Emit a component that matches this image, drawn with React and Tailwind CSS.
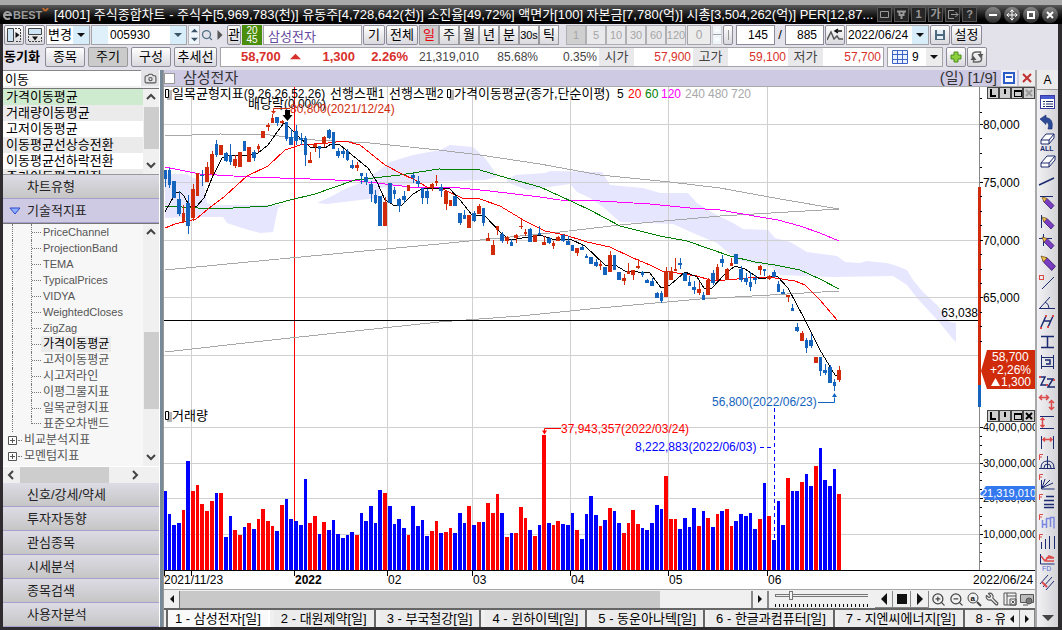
import React, { useState } from 'react';
import { Camera, Search, Wrench, ZoomIn, ZoomOut, Move } from 'lucide-react';

const NAVY = '#1c2a70';
const CORAL = '#dc4a4a';
const UP = '#d02c0c';
const DOWN = '#1464be';

const FIRST_X = 165;
const STEP = 4.684;
const VOLUME_BASE = 570;

// bar heights, negative = down day
const volumes = [
  -79, -56, -45, -47, 60, -109, 79, 85, 66, 59, 69, -77, 77, -33, -54, 40, 35, -43, 47, -41,
  51, 61, 49, 44, -39, 65, -71, -51, -49, -45, -91, 47, 54, -36, 48, -40, -50, -36, -32, -35,
  -38, 35, -57, -49, -64, -47, -80, 77, -64, -46, -51, -42, 35, -64, -44, -50, -34, 39, 49, -37,
  38, 42, -37, -57, -47, 64, -45, 48, -48, 67, 57, 76, -57, 33, -37, 37, 63, 52, -40, 34,
  -45, 135, -47, 45, 49, -46, -45, -57, 40, -31, -56, -74, -55, 44, -50, 62, -59, -47, 37, 47,
  60, 46, -42, -40, -47, -65, -61, 94, 51, 51, -41, -52, -43, -62, 44, -59, 52, -43, 56, -59,
  61, 44, -49, -56, -54, -57, -41, 51, -87, 54, -30, -69, -45, 92, -79, -79, 88, -96, -84, 104,
  -122, -90, -84, -101, 76,
];

// [isUp, bodyTop, bodyBottom, high, low]
const candles = [
  [0, 170, 179, 170, 187], [0, 170, 185, 168, 188], [0, 181, 198, 181, 198], [0, 199, 214, 191, 216], [1, 213, 222, 205, 223],
  [0, 203, 226, 195, 234], [1, 189, 218, 184, 221], [1, 173, 196, 173, 196], [0, 175, 176, 170, 186], [1, 167, 182, 162, 182],
  [1, 154, 174, 151, 176], [0, 144, 155, 140, 157], [1, 145, 155, 145, 155], [0, 153, 161, 152, 162], [0, 155, 162, 144, 165],
  [1, 159, 166, 155, 168], [1, 152, 167, 152, 167], [0, 141, 151, 141, 151], [1, 147, 162, 147, 162], [0, 152, 158, 150, 161],
  [1, 146, 149, 144, 152], [1, 131, 138, 131, 138], [1, 125, 127, 123, 131], [1, 118, 123, 114, 123], [0, 117, 123, 117, 126],
  [1, 121, 123, 120, 124], [0, 122, 139, 122, 141], [0, 137, 145, 129, 145], [0, 131, 141, 125, 145], [0, 138, 140, 133, 145],
  [0, 138, 155, 136, 166], [1, 160, 163, 152, 163], [1, 144, 147, 144, 152], [0, 146, 149, 146, 158], [1, 137, 144, 136, 147],
  [0, 130, 138, 129, 139], [0, 132, 149, 132, 149], [0, 151, 156, 148, 158], [0, 151, 154, 149, 158], [0, 151, 160, 149, 161],
  [0, 165, 168, 160, 169], [1, 165, 168, 162, 171], [0, 173, 176, 173, 184], [0, 177, 182, 173, 185], [0, 184, 194, 181, 202],
  [0, 195, 203, 190, 204], [0, 196, 226, 196, 226], [1, 202, 226, 197, 226], [0, 183, 203, 183, 203], [0, 190, 194, 187, 199],
  [0, 199, 206, 198, 212], [0, 196, 200, 191, 203], [1, 185, 191, 185, 191], [0, 175, 178, 173, 183], [0, 181, 184, 176, 187],
  [0, 188, 198, 188, 204], [0, 191, 198, 189, 204], [1, 184, 188, 183, 191], [1, 181, 183, 175, 186], [0, 187, 191, 184, 197],
  [1, 191, 204, 190, 210], [1, 200, 206, 200, 206], [0, 196, 206, 196, 206], [0, 213, 223, 213, 225], [0, 215, 219, 210, 219],
  [1, 215, 228, 215, 228], [0, 213, 221, 211, 222], [1, 206, 214, 204, 214], [0, 208, 223, 208, 226], [1, 238, 241, 233, 241],
  [1, 245, 255, 240, 255], [1, 226, 230, 226, 235], [0, 234, 241, 232, 243], [1, 237, 241, 236, 244], [0, 242, 246, 239, 246],
  [1, 235, 238, 234, 243], [1, 226, 227, 219, 229], [1, 232, 234, 229, 236], [0, 229, 242, 228, 242], [1, 235, 242, 235, 242],
  [0, 233, 235, 226, 235], [1, 242, 245, 236, 245], [0, 238, 243, 237, 244], [1, 243, 246, 241, 249], [1, 237, 241, 236, 241],
  [0, 235, 241, 234, 242], [0, 241, 245, 236, 245], [0, 245, 251, 245, 251], [1, 248, 253, 248, 256], [0, 247, 250, 245, 250],
  [0, 256, 258, 254, 258], [0, 257, 264, 257, 264], [0, 262, 266, 259, 267], [1, 264, 266, 261, 270], [0, 267, 275, 267, 275],
  [1, 255, 272, 251, 272], [0, 255, 270, 255, 270], [0, 272, 280, 272, 280], [1, 278, 281, 274, 285], [1, 271, 274, 263, 274],
  [1, 270, 275, 270, 280], [1, 266, 268, 259, 269], [0, 272, 275, 271, 277], [0, 280, 283, 279, 283], [0, 281, 286, 278, 286],
  [0, 293, 298, 292, 298], [0, 293, 301, 291, 303], [1, 271, 297, 267, 297], [1, 271, 280, 267, 280], [1, 269, 271, 258, 271],
  [0, 263, 265, 258, 269], [0, 273, 281, 273, 281], [0, 282, 286, 276, 286], [0, 287, 290, 281, 294], [1, 289, 293, 282, 295],
  [0, 295, 300, 292, 300], [1, 280, 295, 278, 295], [0, 273, 283, 270, 285], [1, 267, 280, 264, 280], [0, 259, 263, 255, 267],
  [1, 269, 280, 268, 280], [1, 263, 266, 258, 266], [0, 254, 264, 254, 264], [0, 269, 280, 266, 282], [0, 278, 282, 273, 285],
  [0, 282, 287, 272, 291], [0, 278, 280, 275, 284], [1, 266, 270, 265, 275], [0, 269, 271, 269, 276], [1, 276, 279, 275, 280],
  [0, 272, 277, 270, 277], [0, 284, 292, 281, 292], [0, 292, 294, 289, 294], [1, 295, 297, 295, 302], [0, 308, 311, 304, 311],
  [0, 327, 331, 323, 332], [1, 333, 341, 331, 341], [0, 340, 348, 338, 353], [0, 340, 346, 334, 348], [1, 357, 363, 357, 363],
  [0, 357, 371, 357, 376], [0, 370, 373, 364, 375], [0, 367, 383, 365, 383], [0, 382, 386, 379, 391], [1, 370, 380, 366, 382],
];

const averages = [
  { color: '#a8a8a8', points: '165,136 220,134 270,135 315,140 370,143 439,150 480,155 540,164 600,175 670,182 720,188 780,199 839,209' },
  { color: '#a8a8a8', points: '165,270 290,258 439,244 500,238 560,232 620,225 720,216 839,209' },
  { color: '#a8a8a8', points: '165,352 290,338 439,322 520,316 600,308 700,299 770,295 839,291' },
  { color: '#ff00ff', points: '165,167 200,174 250,177 310,179 360,181 410,187 450,187 490,191 540,197 560,200 600,201 650,204 690,208 720,210 760,217 778,220 800,226 820,233 839,241' },
  { color: '#008000', points: '165,206 215,209 268,206 290,200 315,194 355,180 400,175 439,169 480,170 500,176 540,187 560,196 590,210 620,226 660,236 687,241 710,249 730,256 755,262 775,265 800,270 820,279 839,289' },
  { color: '#ff0000', points: '165,228 175,224 196,219 208,209 225,196 247,176 268,166 285,150 300,145 328,143 345,141 360,145 385,165 400,173 415,180 427,187 445,190 462,198 480,199 500,206 525,221 545,231 565,235 587,242 610,247 633,258 650,265 662,271 677,273 697,276 710,280 725,280 760,277 775,278 795,281 805,285 820,300 837,320 839,321' },
  { color: '#000000', points: '165,212 170,203 176,193 180,192 184,196 190,207 197,206 204,198 212,178 222,158 230,155 245,156 258,153 268,145 280,128 284,123 290,128 300,138 310,147 325,148 331,144 340,145 352,155 368,168 377,182 385,200 395,206 402,205 413,194 422,189 439,188 450,189 460,200 472,215 485,216 500,232 510,240 540,235 555,240 570,239 585,246 605,265 615,265 625,271 650,273 661,288 670,285 685,272 697,277 704,288 712,288 725,274 735,266 745,269 760,279 777,276 788,288 805,320 820,350 835,375 838,376' },
];

const clouds = [
  '165,174 187,174 193,178 203,180 207,203 213,205 282,205 278,208 273,232 260,233 242,228 227,223 223,217 188,217 165,218',
  '317,203 330,197 347,188 360,183 377,172 390,162 413,155 440,150 450,145 473,147 485,158 495,172 497,177 485,180 430,182 380,188 378,198 360,200 327,204',
  '507,180 515,175 545,173 550,171 602,172 610,185 643,188 660,193 688,193 697,203 713,213 733,223 743,229 768,230 775,238 790,242 807,252 837,256 845,262 860,263 867,261 887,263 897,266 907,270 913,280 923,292 937,305 950,322 956,323 956,342 952,338 940,323 917,298 907,285 893,276 833,277 780,275 772,267 737,260 717,243 693,233 673,224 620,222 603,207 590,198 577,192 570,184 527,190 507,182',
];

const searchResults = ['가격이동평균', '거래량이동평균', '고저이동평균', '이동평균선상승전환', '이동평균선하락전환', '주가이동평균밀집'];
const treeLeaves = ['PriceChannel', 'ProjectionBand', 'TEMA', 'TypicalPrices', 'VIDYA', 'WeightedCloses', 'ZigZag', '가격이동평균', '고저이동평균', '시고저라인', '이평그물지표', '일목균형지표', '표준오차밴드'];
const treeGroups = ['비교분석지표', '모멘텀지표'];
const menuSections = ['신호/강세/약세', '투자자동향', '관심종목', '시세분석', '종목검색', '사용자분석'];
const periods = ['일', '주', '월', '년', '분', '30s', '틱'];
const minutes = ['1', '5', '10', '30', '60', '120'];
const stockTabs = ['삼성전자', '대원제약', '부국철강', '윈하이텍', '동운아나텍', '한글과컴퓨터', '지엔씨에너지'];

// left edge and width of bar i, leaving one pixel between neighbours
const barLeft = (i) => Math.round(FIRST_X + i * STEP) - 2;
const barBox = (i) => {
  const left = Math.max(164, barLeft(i));
  return { left, width: barLeft(i + 1) - left - 1 };
};

const Triangle = ({ dir = 'down', size = 8, color = '#111' }) => {
  const turn = { down: 'M0 2h8L4 6z', up: 'M0 6h8L4 2z', left: 'M6 0v8L2 4z', right: 'M2 0v8l4-4z' };
  return (
    <svg width={size} height={size} viewBox="0 0 8 8" className="shrink-0" aria-hidden="true">
      <path d={turn[dir]} fill={color} />
    </svg>
  );
};

const Chevron = ({ dir }) => {
  const d = { up: 'M2 7l4-4 4 4', down: 'M2 4l4 4 4-4', left: 'M8 2L4 6l4 4', right: 'M4 2l4 4-4 4' };
  return (
    <svg width="12" height="12" viewBox="0 0 12 12" aria-hidden="true">
      <path d={d[dir]} fill="none" stroke="#444" strokeWidth="2" />
    </svg>
  );
};

const ToolButton = ({ label, className = '', children }) => (
  <button
    aria-label={label}
    className={`flex h-5 shrink-0 items-center justify-center rounded-xs border border-[#8d8b98] bg-linear-to-b from-white to-[#d9d9de] whitespace-nowrap ${className}`}
  >
    {children}
  </button>
);

const SelectBox = ({ label, value, className = '' }) => (
  <span className={`flex h-5 shrink-0 border border-[#a3a3a8] bg-white ${className}`}>
    <select aria-label={label} className="min-w-0 flex-1 appearance-none bg-transparent pl-px leading-4 outline-none">
      <option>{value}</option>
    </select>
    <span className="flex w-4 items-center justify-center bg-[#d8edfa]">
      <Triangle />
    </span>
  </span>
);

const Spinner = () => (
  <span className="flex h-5 w-3 shrink-0 flex-col items-center justify-around border border-[#b5b5ba] bg-[#eef5fb]">
    <Triangle dir="up" size={7} color="#3b5568" />
    <Triangle dir="down" size={7} color="#3b5568" />
  </span>
);

const windowTools = [
  ['복사', <path d="M2.500 3.500h8v6h-8z" />],
  ['고정', <path d="M2 3.500h9M4.500 4v3h4V4M6.500 7v4" strokeWidth="2" />],
  ['1', null],
  ['가', null],
  ['내보내기', <path d="M8 2.500H2.500v8H8M5 6.500h7M9.500 4L12 6.500 9.500 9" />],
  ['?', null],
];

const TitleBar = () => (
  <header className="flex h-6 shrink-0 items-center border-t-[5px] border-[#a9a9a9] bg-linear-to-b from-[#5a5a5a] via-[#1c1c1c] to-black pl-0.5 text-white">
    <span className="flex w-[52px] shrink-0 items-center text-[11px] font-bold text-[#9c9c9c]">
      <svg width="11" height="11" viewBox="0 0 11 11" aria-hidden="true">
        <path d="M2 6h7a3.5 3.5 0 1 0-1 3" fill="none" stroke="#a2a2a2" strokeWidth="2" />
      </svg>
      BEST
      <svg width="7" height="5" viewBox="0 0 7 5" className="mb-2" aria-hidden="true">
        <path d="M1 0q2 5 5 0" fill="none" stroke="#c56a2c" strokeWidth="2" />
      </svg>
    </span>
    <h1 className="min-w-0 flex-1 whitespace-nowrap">
      [4001] 주식종합차트 - 주식수[5,969,783(천)] 유동주[4,728,642(천)] 소진율[49,72%] 액면가[100] 자본금[7,780(억)] 시총[3,504,262(억)] PER[12,87...
    </h1>
    <div className="flex shrink-0 gap-0.5 pr-2 text-[11px] font-bold text-[#9a9a9a]">
      {windowTools.map(([name, drawing]) => (
        <button key={name} aria-label={name} className="flex size-[15px] items-center justify-center border border-[#555] bg-[#262626] leading-none">
          {drawing ? (
            <svg width="13" height="13" viewBox="0 0 13 13" fill="none" stroke="#9a9a9a">
              {drawing}
            </svg>
          ) : (
            name
          )}
        </button>
      ))}
    </div>
    <div className="flex shrink-0 gap-[3px] pr-1">
      {['min', 'move', 'max', 'close'].map((kind) => (
        <button key={kind} aria-label={kind} className="flex size-4 items-center justify-center rounded-full bg-linear-to-b from-[#888] to-[#2c2c2c]">
          {kind === 'move' ? (
            <Move size={12} color="#fff" />
          ) : (
            <svg width="10" height="10" viewBox="0 0 10 10" fill="none" stroke="#fff" strokeWidth="2">
              <path d={kind === 'min' ? 'M1 5h8' : kind === 'max' ? 'M2 2h6v6H2z' : 'M2 2l6 6M8 2l-6 6'} />
            </svg>
          )}
        </button>
      ))}
    </div>
  </header>
);

const PrimaryToolbar = () => {
  const [period, setPeriod] = useState('일');

  return (
    <div className="flex h-5 items-center gap-px">
      <ToolButton label="좌측 패널" className="w-5">
        <svg width="14" height="14" viewBox="0 0 14 14" fill="none" stroke="#444">
          <path d="M.5 .5h6v13h-6z" fill="#cfe4f4" />
          <path d="M8 .5h5.5v13H8" strokeDasharray="2 1" />
          <path d="M8.500 4v6l4-3z" fill="#111" stroke="none" />
        </svg>
      </ToolButton>
      <ToolButton label="상단 패널" className="w-5">
        <svg width="14" height="14" viewBox="0 0 14 14" fill="none" stroke="#444">
          <path d="M.5 .5h13v6H.5z" fill="#cfe4f4" />
          <path d="M.5 8v5.500h13V8" strokeDasharray="2 1" />
          <path d="M4 8.500h6l-3 4z" fill="#111" stroke="none" />
        </svg>
      </ToolButton>
      <SelectBox label="변경" value="변경" className="w-11" />
      <span className="flex h-5 w-[96px] shrink-0 border border-[#a3a3a8] bg-white text-xs">
        <span className="w-4 bg-[#dff0fb]" />
        <input aria-label="종목코드" defaultValue="005930" className="min-w-0 flex-1 pl-0.5 outline-none" />
        <span className="flex w-4 items-center justify-center bg-[#d8edfa]">
          <Triangle color="#3b5568" />
        </span>
      </span>
      <Spinner />
      <button aria-label="종목찾기" className="flex h-5 w-3 shrink-0 items-center justify-center">
        <Search size={12} color="#4d6f86" strokeWidth={2.5} />
      </button>
      <button aria-label="다음" className="flex h-5 w-3 shrink-0 items-center justify-center">
        <Triangle dir="right" size={10} color="#555" />
      </button>
      <ToolButton className="w-3.5">관</ToolButton>
      <button className="flex h-5 w-5 shrink-0 flex-col items-center justify-center bg-[#4b8e0c] text-[10px] leading-[9px] text-white">
        <span>20</span>
        <span>45</span>
      </button>
      <input
        aria-label="종목명"
        defaultValue="삼성전자"
        className="h-5 w-[99px] shrink-0 border border-[#a3a3a8] bg-white pl-1 text-[#6448a0] outline-none"
      />
      <ToolButton className="w-[22px]">기</ToolButton>
      <ToolButton className="w-8">전체</ToolButton>
      <div className="flex shrink-0">
        {periods.map((name) => (
          <button
            key={name}
            onClick={() => setPeriod(name)}
            className={`flex h-5 w-5 items-center justify-center border border-[#9a9a9e] ${name === '30s' ? 'text-[11px]' : ''} ${
              period === name ? 'bg-[#cdcdcd] text-red-600' : 'bg-linear-to-b from-white to-[#d9d9de]'
            }`}
          >
            {name}
          </button>
        ))}
      </div>
      <div className="ml-1.5 flex shrink-0 text-[11px]">
        {minutes.map((name, i) => (
          <button
            key={name}
            disabled
            className={`flex h-5 w-5 items-center justify-center border border-[#b0b0b4] text-[#a5a5a5] ${i === 0 ? 'bg-[#cfcfcf]' : 'bg-[#e9e9ec]'}`}
          >
            {name}
          </button>
        ))}
      </div>
      <input
        aria-label="분"
        disabled
        defaultValue="0"
        className="h-5 w-6 shrink-0 border border-[#a3a3a8] bg-[#ececec] text-center text-xs text-[#a5a5a5]"
      />
      <span className="flex h-5 w-2.5 shrink-0 flex-col items-center justify-around border border-[#cfcfd4] bg-[#eef5fb]">
        <Triangle dir="up" size={6} color="#fff" />
        <span className="w-full border-t border-[#a3a3a8]" />
        <Triangle dir="down" size={6} color="#fff" />
      </span>
      <ToolButton label="구분" className="w-2.5">
        <span className="h-2.5 border-l border-[#999]" />
      </ToolButton>
      <input aria-label="표시 봉수" defaultValue="145" className="ml-0.5 h-5 w-[39px] shrink-0 border border-[#8d8b98] bg-white pr-1.5 text-right text-xs" />
      <span className="w-2 text-center">/</span>
      <input aria-label="전체 봉수" defaultValue="885" className="h-5 w-[39px] shrink-0 border border-[#8d8b98] bg-white pr-1.5 text-right text-xs" />
      <ToolButton label="추세" className="w-5">
        <svg width="16" height="14" viewBox="0 0 16 14" fill="none" stroke="#555" strokeWidth="1.500">
          <path d="M0 12L4 4l3 7 3-3 2 3h4" />
          <path d="M15 3H9M11 1L8 3l3 2" stroke="#111" />
        </svg>
      </ToolButton>
      <SelectBox label="날짜" value="2022/06/24" className="w-[83px] text-xs" />
      <ToolButton label="저장" className="w-5">
        <svg width="12" height="12" viewBox="0 0 12 12">
          <path d="M1 1h10v10H1z" fill="#4d6a80" />
          <path d="M3 1h6v4H3zM3 7h6v3H3z" fill="#e6eef4" />
        </svg>
      </ToolButton>
      <ToolButton className="w-[31px]">설정</ToolButton>
    </div>
  );
};

const QuoteToolbar = () => (
  <div className="flex h-5 items-center gap-[3px]">
    <span className="w-[38px] shrink-0 text-[13px] font-bold">동기화</span>
    <ToolButton className="w-10">종목</ToolButton>
    <button className="h-5 w-10 shrink-0 rounded-xs border border-[#9a9a9e] bg-[#cbcbcb]">주기</button>
    <ToolButton className="w-10">구성</ToolButton>
    <ToolButton className="w-[43px]">추세선</ToolButton>
    <div className="flex h-5 min-w-0 shrink-0 items-center border border-[#a3a3a8] bg-white text-xs text-[#444]">
      <span className="flex w-[134px] items-center justify-between pl-5 text-[13px] font-bold text-[#d8302c]">
        <span>58,700</span>
        <Triangle dir="up" size={11} color="#d8302c" />
        <span className="pl-3">1,300</span>
      </span>
      <span className="w-[53px] text-right text-[13px] font-bold text-[#d8302c]">2.26%</span>
      <span className="w-[71px] text-right">21,319,010</span>
      <span className="w-[59px] text-right">85.68%</span>
      <span className="w-[59px] text-right">0.35%</span>
      <span className="ml-0.5 flex h-full w-[35px] items-center justify-center bg-[#e9e9ec] text-[13px]">시가</span>
      <span className="w-[59px] pr-0.5 text-right text-[#d8302c]">57,900</span>
      <span className="flex h-full w-[35px] items-center justify-center bg-[#e9e9ec] text-[13px]">고가</span>
      <span className="w-[60px] pr-0.5 text-right text-[#d8302c]">59,100</span>
      <span className="flex h-full w-[35px] items-center justify-center bg-[#e9e9ec] text-[13px]">저가</span>
      <span className="w-[60px] pr-0.5 text-right text-[#d8302c]">57,700</span>
    </div>
    <span className="flex h-5 w-[56px] shrink-0 items-center border border-[#a3a3a8] bg-white text-xs">
      <svg width="16" height="14" viewBox="0 0 16 14" className="mx-1 shrink-0">
        <path d="M.5 .5h15v13H.5zM5.500 0v14M10.500 0v14M0 4.500h16M0 9.500h16" fill="#eaf2ff" stroke="#3c62c8" />
      </svg>
      <select aria-label="화면 분할" className="min-w-0 flex-1 appearance-none outline-none">
        <option>9</option>
      </select>
      <span className="flex h-full w-4 items-center justify-center bg-[#ececec]">
        <Triangle />
      </span>
    </span>
    <ToolButton label="추가" className="w-5">
      <svg width="12" height="12" viewBox="0 0 12 12">
        <path d="M4 1h4v3h3v4H8v3H4V8H1V4h3z" fill="#8ccf3c" stroke="#4a8c1c" />
      </svg>
    </ToolButton>
    <ToolButton label="새로고침" className="-ml-0.5 w-5">
      <svg width="14" height="14" viewBox="0 0 14 14" fill="none" stroke="#666" strokeWidth="1.500">
        <path d="M2.500 8V5q0-3 4-3h4v3M11.500 6v3q0 3-4 3h-4V9" />
        <path d="M7.500 4h6l-3 4zM.5 10h6l-3-4z" fill="#555" stroke="none" />
      </svg>
    </ToolButton>
  </div>
);

const VerticalScroll = ({ before, thumb }) => (
  <div className="flex w-4 shrink-0 flex-col items-center bg-[#f0f0f0]">
    <span className="flex h-[18px] items-center">
      <Chevron dir="up" />
    </span>
    <span className={before} />
    <span className={`w-[15px] bg-[#cdcdcd] ${thumb}`} />
    <span className="flex-1" />
    <span className="flex h-[18px] items-center">
      <Chevron dir="down" />
    </span>
  </div>
);

const SectionButton = ({ label, open }) => (
  <button
    className={`flex h-6 w-full shrink-0 items-center border-b border-[#a69fcb] text-[13px] text-[#222] ${
      open ? 'bg-[#cfcae3]' : 'bg-linear-to-b from-[#dddbe5] to-[#c6c6c6]'
    }`}
  >
    <span className="flex w-6 justify-center">
      {open && (
        <svg width="12" height="8" viewBox="0 0 12 8" aria-hidden="true">
          <path d="M1 1h10L6 7z" fill="#8fb0ff" stroke="#2b46c8" />
        </svg>
      )}
    </span>
    {label}
  </button>
);

const Sidebar = () => {
  const [query, setQuery] = useState('이동');

  return (
    <aside className="flex w-[157px] shrink-0 flex-col border-r border-white bg-[#f0f0f0]">
      <div className="flex h-4 shrink-0">
        <input
          aria-label="지표 검색"
          value={query}
          onChange={(e) => setQuery(e.target.value)}
          className="min-w-0 flex-1 border-t border-[#888] bg-white pl-0.5 leading-none outline-none"
        />
        <button aria-label="캡처" className="flex w-[18px] items-center justify-center bg-[#e4e4e8]">
          <Camera size={13} color="#555" />
        </button>
      </div>
      <div className="mt-0.5 flex h-[86px] shrink-0 border-t border-[#777] bg-white">
        <ul className="min-w-0 flex-1 overflow-hidden">
          {searchResults.map((name, i) => (
            <li
              key={name}
              className={`h-4 pl-[3px] leading-4 whitespace-nowrap ${i === 0 ? 'bg-[#cfebcf]' : i % 2 ? 'bg-[#ebebeb]' : 'bg-white'}`}
            >
              {name}
            </li>
          ))}
        </ul>
        <VerticalScroll before="h-0" thumb="h-[42px]" />
      </div>
      <div className="h-px shrink-0 bg-[#999]" />
      <SectionButton label="차트유형" />
      <SectionButton label="기술적지표" open />

      <div className="flex min-h-0 flex-1 border-t border-[#777] bg-[#f7f7f7]">
        <ul className="min-w-0 flex-1 overflow-hidden text-xs text-[#555]">
          {treeLeaves.map((name, i) => (
            <li key={name} className="flex h-4 items-center">
              <span className="ml-[9px] w-[19px] self-stretch border-l border-dotted border-[#777]" />
              <span className={`flex w-2.5 border-l border-dotted border-[#777] ${i === treeLeaves.length - 1 ? 'h-2 items-end self-start' : 'items-center self-stretch'}`}>
                <span className="w-full border-t border-dotted border-[#777]" />
              </span>
              <span
                className={`px-0.5 leading-4 whitespace-nowrap ${/^[A-Z]/.test(name) ? 'text-[11px]' : ''} ${
                  name === '가격이동평균' ? 'bg-[#ebebeb] text-black' : ''
                }`}
              >
                {name}
              </span>
            </li>
          ))}
          {treeGroups.map((name) => (
            <li key={name} className="flex h-4 items-center">
              <svg width="9" height="9" viewBox="0 0 9 9" className="ml-[5px]" aria-hidden="true">
                <path d="M.5 .5h8v8h-8zM2 4.500h5M4.500 2v5" fill="#fff" stroke="#555" />
              </svg>
              <span className="mx-px w-1 border-t border-dotted border-[#777]" />
              <span className="pl-px leading-4 whitespace-nowrap">{name}</span>
            </li>
          ))}
        </ul>
        <VerticalScroll before="h-[90px]" thumb="h-[77px]" />
      </div>
      <div className="flex h-[17px] shrink-0 items-center border-t border-white bg-[#f0f0f0] pl-0.5">
        <Chevron dir="left" />
        <span className="mx-[3px] h-4 w-[89px] bg-[#cdcdcd]" />
        <span className="ml-[17px]">
          <Chevron dir="right" />
        </span>
      </div>
      {menuSections.map((name) => (
        <SectionButton key={name} label={name} />
      ))}
    </aside>
  );
};

const PaneButtons = ({ x, y, muted }) => (
  <g transform={`translate(${x} ${y})`} shapeRendering="crispEdges">
    {[0, 12, 24, 36].map((dx) => (
      <path key={dx} d={`M${dx + 0.5} .5h11v11h-11z`} fill="#cfcfcf" stroke="#444" />
    ))}
    <path d="M4 2v7h5M18 2v5" fill="none" stroke="#000" strokeWidth="2" />
    <path d="M27 3h7v6h-7zM27 4h7" fill="none" stroke="#000" />
    <path d="M39 3l6 6M45 3l-6 6" stroke={muted ? '#999' : '#000'} strokeWidth="2" shapeRendering="auto" />
  </g>
);

const LegendMark = ({ x, y }) => (
  <g transform={`translate(${x} ${y})`}>
    <path d="M2 1h5v10H2z" fill="#b5b5b5" />
    <path d="M.5 .5h3v8h-3z" fill="#fff" stroke="#000" />
  </g>
);

const PriceChart = () => (
  <svg viewBox="164 87 871 502" className="block h-full w-full bg-white text-xs" role="img" aria-label="삼성전자 일봉 차트">
    <g fill="#e6e6ff">
      {clouds.map((points) => (
        <polygon key={points} points={points} />
      ))}
    </g>
    <g stroke="#d0d0d0" shapeRendering="crispEdges">
      {[124, 182, 240, 297, 355, 427, 463, 498, 534].map((y) => (
        <path key={y} d={`M164 ${y}.5H979`} />
      ))}
      {[191, 387, 472, 570, 668, 767].map((x) => (
        <path key={x} d={`M${x}.5 87V570`} />
      ))}
    </g>
    <path d="M294.500 87V570" stroke="#f00" shapeRendering="crispEdges" />

    <g shapeRendering="crispEdges">
      {volumes.map((v, i) => {
        const { left, width } = barBox(i);
        return <rect key={i} x={left} y={VOLUME_BASE - Math.abs(v)} width={width} height={Math.abs(v)} fill={v > 0 ? '#f00' : '#00f'} />;
      })}
    </g>
    <g fill="none" shapeRendering="crispEdges">
      {averages.map((line) => (
        <polyline key={line.points} points={line.points} stroke={line.color} />
      ))}
    </g>
    <g shapeRendering="crispEdges">
      {candles.map(([isUp, top, bottom, high, low], i) => {
        const { left, width } = barBox(i);
        return (
          <g key={i} fill={isUp ? UP : DOWN}>
            <rect x={left + Math.floor(width / 2)} y={high} width="1" height={low - high} />
            <rect x={left} y={top} width={width} height={bottom - top} />
          </g>
        );
      })}
    </g>

    {/* support line and axes */}
    <path d="M164 320.500H979" stroke="#000" shapeRendering="crispEdges" />
    <text x="978" y="317" textAnchor="end">63,038</text>
    <path d="M979.500 87V570" stroke="#888" shapeRendering="crispEdges" />
    <rect x="978" y="187" width="3" height="198" fill={UP} />
    <rect x="978" y="385" width="3" height="22" fill={DOWN} />
    <path d="M164 570.500H1035M164.500 571v5M191.500 571v5M294.500 571v5M387.500 571v5M472.500 571v5M570.500 571v5M668.500 571v5M767.500 571v5" stroke="#000" shapeRendering="crispEdges" />
    <g stroke="#000" shapeRendering="crispEdges">
      {[98, 112, 138, 153, 167, 196, 211, 225, 254, 269, 283, 312, 326, 341].map((y) => (
        <path key={y} d={`M980 ${y}.5h2`} />
      ))}
      {[436, 445, 454, 472, 480, 489, 507, 516, 525, 543, 552, 561].map((y) => (
        <path key={y} d={`M980 ${y}.5h2`} />
      ))}
      {[124, 182, 240, 297, 427, 463, 498, 534].map((y) => (
        <path key={y} d={`M980 ${y}.5h3`} />
      ))}
    </g>
    <g>
      <text x="983" y="129">80,000</text>
      <text x="983" y="187">75,000</text>
      <text x="983" y="245">70,000</text>
      <text x="983" y="302">65,000</text>
    </g>
    <g fontSize="11">
      <text x="983" y="431">40,000,000</text>
      <text x="983" y="467">30,000,000</text>
      <text x="983" y="502">20,000,000</text>
      <text x="983" y="538">10,000,000</text>
    </g>
    <polygon points="981,371 987,350 1035,350 1035,389 987,389" fill={UP} />
    <g fill="#fff">
      <text x="992" y="361">58,700</text>
      <text x="990" y="374">+2,26%</text>
      <text x="1001" y="386">1,300</text>
      <path d="M991 386h9l-4.500-8z" />
    </g>
    <polygon points="980,494 986,486 1035,486 1035,500 986,500" fill="#3478f0" />
    <text x="981" y="497" fontSize="11" fill="#fff">21,319,010</text>

    <g>
      <text x="164" y="584">2021/11/23</text>
      <text x="295" y="584" fontWeight="bold">2022</text>
      <text x="388" y="584">02</text>
      <text x="473" y="584">03</text>
      <text x="571" y="584">04</text>
      <text x="669" y="584">05</text>
      <text x="768" y="584">06</text>
      <text x="973" y="584">2022/06/24</text>
    </g>

    {/* legend of the price pane */}
    <LegendMark x={165} y={89} />
    <text x="172" y="98">
      <tspan fontSize="13">일목균형지표</tspan>(9,26,26,52,26)
    </text>
    <text x="330" y="98"><tspan fontSize="13">선행스팬</tspan>1</text>
    <text x="389" y="98"><tspan fontSize="13">선행스팬</tspan>2</text>
    <LegendMark x={447} y={89} />
    <text x="454" y="98" fontSize="13">가격이동평균(종가,단순이평)</text>
    <text x="617" y="98">5</text>
    <text x="628" y="98" fill="#f00">20</text>
    <text x="645" y="98" fill="#008000">60</text>
    <text x="661" y="98" fill="#f0f">120</text>
    <g fill="#a8a8a8">
      <text x="685" y="98">240</text>
      <text x="708" y="98">480</text>
      <text x="731" y="98">720</text>
    </g>
    <LegendMark x={165} y={411} />
    <text x="172" y="420" fontSize="13">거래량</text>

    {/* annotations */}
    <text x="248" y="108"><tspan fontSize="13">배당락</tspan>(0.00%)</text>
    <text x="290" y="113" fill={UP}>80,800(2021/12/24)</text>
    <path d="M290 108.500h-16.500v4" fill="none" stroke={UP} />
    <path d="M271 111h5l-2.500 3z" fill={UP} />
    <path d="M285 110h5v5h2.500l-5 6-5-6h2.500z" fill="#000" />
    <text x="712" y="406" fill={DOWN}>56,800(2022/06/23)</text>
    <path d="M818 402.500h16.500v-5" fill="none" stroke={DOWN} />
    <path d="M832 397h5l-2.500-4z" fill={DOWN} />
    <text x="561" y="433" fill="#f00">37,943,357(2022/03/24)</text>
    <path d="M561 428.500h-16.500v3" fill="none" stroke="#f00" />
    <path d="M542 430.500h5l-2.500 4z" fill="#f00" />
    <text x="635" y="451" fill="#00f">8,222,883(2022/06/03)</text>
    <path d="M760 447.500h14M774.500 408V540" fill="none" stroke="#00f" strokeDasharray="4 3" shapeRendering="crispEdges" />

    <PaneButtons x={987} y={87} muted />
    <PaneButtons x={987} y={410} />
  </svg>
);

const ChartControls = () => (
  <div className="flex h-[19px] shrink-0 items-center border-t border-[#a5a5a5] bg-[#f0f0f0]">
    <button aria-label="왼쪽으로" className="flex h-[17px] w-4 items-center justify-center border-r border-[#777]">
      <Triangle dir="left" />
    </button>
    <div className="flex h-[17px] flex-1 border-r-2 border-[#888]">
      <span className="w-[84%] bg-[#c8c8c8]" />
    </div>
    <button aria-label="오른쪽으로" className="flex h-[17px] w-4 items-center justify-center border-r-2 border-[#888]">
      <Triangle dir="right" />
    </button>
    <div className="relative mx-1.5 h-full w-[94px]">
      <input type="range" aria-label="확대 비율" defaultValue="16" className="absolute inset-0 h-full w-full opacity-0" />
      <svg className="h-full w-full" viewBox="0 0 94 18" shapeRendering="crispEdges" aria-hidden="true">
        <path d="M0 5.500h93" stroke="#777" strokeWidth="3" />
        <path d="M1 5.500h92" stroke="#eee" />
        <path d="M14.500 1.500h3v8h-3z" fill="#f4f4f4" stroke="#777" />
        <path d="M0 15.500h94" stroke="#111" strokeWidth="3" strokeDasharray="1 3" />
      </svg>
    </div>
    {['left', 'stop', 'right'].map((kind) => (
      <button key={kind} aria-label={kind} className="flex h-[17px] w-[18px] items-center justify-center border-r border-b border-[#888]">
        {kind === 'stop' ? <span className="size-2.5 bg-[#111]" /> : <Triangle dir={kind} size={12} />}
      </button>
    ))}
    <button aria-label="확대" className="flex w-[18px] justify-center"><ZoomIn size={15} color="#444" /></button>
    <button aria-label="축소" className="flex w-[18px] justify-center"><ZoomOut size={15} color="#444" /></button>
    <button aria-label="전체 보기" className="flex w-[18px] justify-center">
      <svg width="15" height="15" viewBox="0 0 15 15" fill="none" stroke="#444">
        <circle cx="6" cy="6" r="5" />
        <path d="M10 10l4 4" strokeWidth="2" />
        <text x="3.500" y="8.500" fontSize="8" fontWeight="bold" fill="#111" stroke="none">a</text>
      </svg>
    </button>
    <button aria-label="설정" className="flex w-[18px] justify-center"><Wrench size={14} color="#555" className="-scale-x-100" /></button>
    <button aria-label="닫기" className="flex w-[18px] justify-center">
      <svg width="14" height="14" viewBox="0 0 14 14" fill="none" stroke="#555">
        <path d="M1 1h12v12H1zM4 1v12M4 4h9M7 7h6v6H7zM8.500 8.500l3 3M11.500 8.500l-3 3" />
      </svg>
    </button>
    <button aria-label="캡처 저장" className="flex w-4 justify-center">
      <svg width="14" height="14" viewBox="0 0 14 14" fill="none" stroke="#555">
        <path d="M.5 2.500h13v8H.5zM3 13h5" fill="#bbb" />
        <circle cx="9" cy="9" r="3" fill="#777" />
      </svg>
    </button>
  </div>
);

const StockTabs = () => {
  const [active, setActive] = useState('삼성전자');

  return (
    <nav className="flex h-[19px] shrink-0 border-t-2 border-[#666] bg-[#f0f0f0] pl-0.5">
      <div className="flex min-w-0 flex-1 gap-1 overflow-hidden whitespace-nowrap">
        {[...stockTabs, '유니온'].map((name, i) => (
          <button
            key={name}
            onClick={() => setActive(name)}
            className={`shrink-0 border-r-2 px-[7px] leading-4 ${
              active === name ? 'border-l-2 border-r-white border-l-[#666] bg-[#fafafa]' : 'border-[#666] bg-[#ececec]'
            }`}
          >
            {i + 1} - {name}[일]
          </button>
        ))}
      </div>
      <button aria-label="이전 탭" className="flex w-[15px] items-center justify-center border-r border-[#888]">
        <Triangle dir="left" />
      </button>
      <button aria-label="다음 탭" className="flex w-[15px] items-center justify-center border-r border-[#888]">
        <Triangle dir="right" />
      </button>
    </nav>
  );
};

const Pencil = ({ big }) => (
  <g transform={big ? 'translate(-2 -2) scale(1.2)' : undefined}>
    <path d="M6 6l4 .5 7 7-3 3.500-7-7z" fill="#7a3cc0" stroke="#3c1c70" strokeWidth=".8" />
    <path d="M5 5l5 1.500L7 10z" fill="#f0c050" stroke="#6b5010" strokeWidth=".6" />
  </g>
);

const FMark = () => <path d="M2.500 8V2.500H6M2.500 5H5" stroke={CORAL} />;

const drawingTools = [
  ['목록', <><rect x="3.500" y="3.500" width="14" height="13" fill="#fff" stroke="#3a3aa0" /><path d="M4 5.500h13" stroke="#4a5ad0" strokeWidth="3" /><path d="M6 9.500h2M9 9.500h7M6 12h2M9 12h7M6 14.500h2M9 14.500h7" /></>],
  ['되돌리기', <path d="M3 7l6-4v2.500q8 1 6 11.500h-4q2-6-2-7v2.500z" fill="#2c4c98" stroke="#1c2a70" strokeWidth=".6" />],
  ['모두 지우기', <><path d="M4 8l5-6h8l-5 6zM4 8v4h8V8M12 12l5-6V2" fill="#fff" /><text x="3" y="19" fontSize="7" fontWeight="bold" fill={NAVY} stroke="none">ALL</text></>],
  ['지우기', <path d="M4 11l6-7h8l-6 7zM4 11v4h8v-4M12 15l6-7V4" fill="#fff" />],
  ['추세선', <path d="M2 13L17 6" strokeWidth="1.500" />],
  ['수평선', <><path d="M3 4.500h13" /><Pencil /></>],
  ['수직선', <><path d="M4.500 3v13" /><Pencil /></>],
  ['십자선', <><path d="M2 6.500h13M6.500 2v12" /><Pencil /></>],
  ['펜', <Pencil big />],
  ['가격선', <><path d="M5 17L17 5" /><rect x="2.500" y="3.500" width="4" height="4" stroke={CORAL} /></>],
  ['각도선', <path d="M2 16.500h16M3 16L13 5M8 10q4 2 4 6" />],
  ['평행선', <><path d="M4 15L9 4M11 15l5-11M7 9h7" strokeWidth="1.500" /><path d="M3 16h2M8 4h2M10 15h2M15 4h2" stroke={CORAL} strokeWidth="2" /></>],
  ['구간', <path d="M4 4.500h13M4 15.500h13M10.500 4v12" strokeWidth="1.500" />],
  ['사각형', <><path d="M4.500 3v14M16.500 3v14M4 5.500h13M4 14.500h13" /><path d="M8 8h5v4H9" strokeWidth="1.500" /></>],
  ['파동', <><path d="M3 5h5l-4 8h6M10 7h6l-5 8h7" strokeWidth="1.500" /><path d="M2 5h2M9 13h2M16 8h2" stroke={CORAL} strokeWidth="2" /></>],
  ['화살표', <path d="M3 5.500h8M5 3L2.500 5.500 5 8M9 3l2.500 2.500L9 8M14.500 9v8M12 11l2.500-2.500L17 11M12 15l2.500 2.500L17 15" stroke={CORAL} strokeWidth="1.500" />],
  ['세로 간격', <><path d="M3 4.500h14M3 16.500h14" /><path d="M5.500 6v9M3.500 8l2-2 2 2M3.500 13l2 2 2-2" stroke={CORAL} strokeWidth="1.500" /></>],
  ['가로 간격', <><path d="M4.500 4v13M16.500 4v13" /><path d="M6 7.500h9M8 5.500l-2 2 2 2M13 5.500l2 2-2 2" stroke={CORAL} strokeWidth="1.500" /></>],
  ['피보나치 원', <><FMark /><path d="M2 16.500h16M10.500 4v13M4 16q0-7 6.500-7T17 16M7 16q0-4 3.500-4T14 16" /></>],
  ['피보나치 팬', <><FMark /><path d="M4.500 8v9h13M5 16L8 7M5 16l8-8M5 16l11-5" /></>],
  ['피보나치 되돌림', <><FMark /><path d="M9 4.500h8M7 8.500h10M7 12.500h10M7 15.500h10" strokeWidth="1.500" /></>],
  ['피보나치 목표', <><FMark /><path d="M5.500 8v8M5 12.500h4M9.500 6v10M9 6.500h4M13.500 5v10M13 5.500h4v11" stroke="#7a86e0" strokeWidth="1.500" /></>],
  ['피보나치 시간대', <><FMark /><path d="M4.500 10v7M8.500 7v10M12.500 4v13M17.500 4v13" /></>],
  ['패턴', <><path d="M3.500 2v10h14" /><path d="M4 4l4 5 4-5 5 2M9 6h8M9 9h8" stroke={CORAL} strokeWidth="1.500" /><text x="5" y="19" fontSize="7" fill="#5a6ad8" stroke="none">FD</text></>],
  ['채널', <><path d="M3 12L11 3M6 15l9-10M9 18l8-9" /><path d="M5 10l5 5" stroke={CORAL} strokeWidth="2" /></>],
];

const DrawingToolbar = () => (
  <aside className="flex w-[23px] shrink-0 flex-col border-l-2 border-[#a8a8a8] bg-linear-to-r from-[#f2f2f5] to-[#d4d4d8]">
    <button className="mb-0.5 h-5 border-b border-[#999] bg-[#ececec] text-xs">A</button>
    {drawingTools.map(([label, drawing]) => (
      <button key={label} aria-label={label} className="h-5 shrink-0">
        <svg width="20" height="20" viewBox="0 0 20 20" fill="none" stroke={NAVY}>
          {drawing}
        </svg>
      </button>
    ))}
    <button aria-label="더보기" className="mt-auto flex h-[19px] items-center justify-center">
      <Triangle size={12} color="#444" />
    </button>
  </aside>
);

const App = () => (
  <div className="flex h-screen flex-col overflow-hidden bg-[#e3e1e9] font-['Liberation_Sans','Noto_Sans_CJK_KR',sans-serif] text-[13px] leading-4 text-black">
    <TitleBar />
    <div className="flex min-h-0 flex-1 flex-col border-r-4 border-b-[3px] border-l-[3px] border-[#2e2c2e]">
      <div className="flex shrink-0 flex-col gap-0.5 overflow-hidden pt-px pb-[3px] pl-px">
        <PrimaryToolbar />
        <QuoteToolbar />
      </div>
      <div className="flex min-h-0 flex-1">
        <Sidebar />
        <div className="w-[3px] shrink-0 bg-[#788a98]" />
        <main className="flex min-w-0 flex-1 flex-col border-l border-[#999]">
          <div className="flex h-[17px] shrink-0 items-center border-b border-[#aaa] bg-[#cfcae3] text-[15px] text-[#333]">
            <input type="checkbox" aria-label="차트 선택" className="size-[11px] appearance-none border border-[#999] bg-white" />
            <h2 className="ml-2 flex-1">삼성전자</h2>
            <span className="mr-1">(일) [1/9]</span>
            <button aria-label="최대화" className="mr-0.5 flex size-4 items-center justify-center bg-[#f0f0f4]">
              <svg width="12" height="12" viewBox="0 0 12 12">
                <path d="M1 1h10v10H1z" fill="#fff" stroke="#2c5cc8" strokeWidth="2" />
                <path d="M3 5h6" stroke="#2c5cc8" strokeWidth="2" />
              </svg>
            </button>
            <button aria-label="차트 닫기" className="flex size-4 items-center justify-center bg-[#ececec]">
              <svg width="10" height="10" viewBox="0 0 10 10">
                <path d="M1 1l8 8M9 1L1 9" stroke="#c03030" strokeWidth="2" />
              </svg>
            </button>
          </div>
          <div className="min-h-0 flex-1">
            <PriceChart />
          </div>
          <ChartControls />
          <StockTabs />
        </main>
        <DrawingToolbar />
      </div>
    </div>
  </div>
);

export default App;
